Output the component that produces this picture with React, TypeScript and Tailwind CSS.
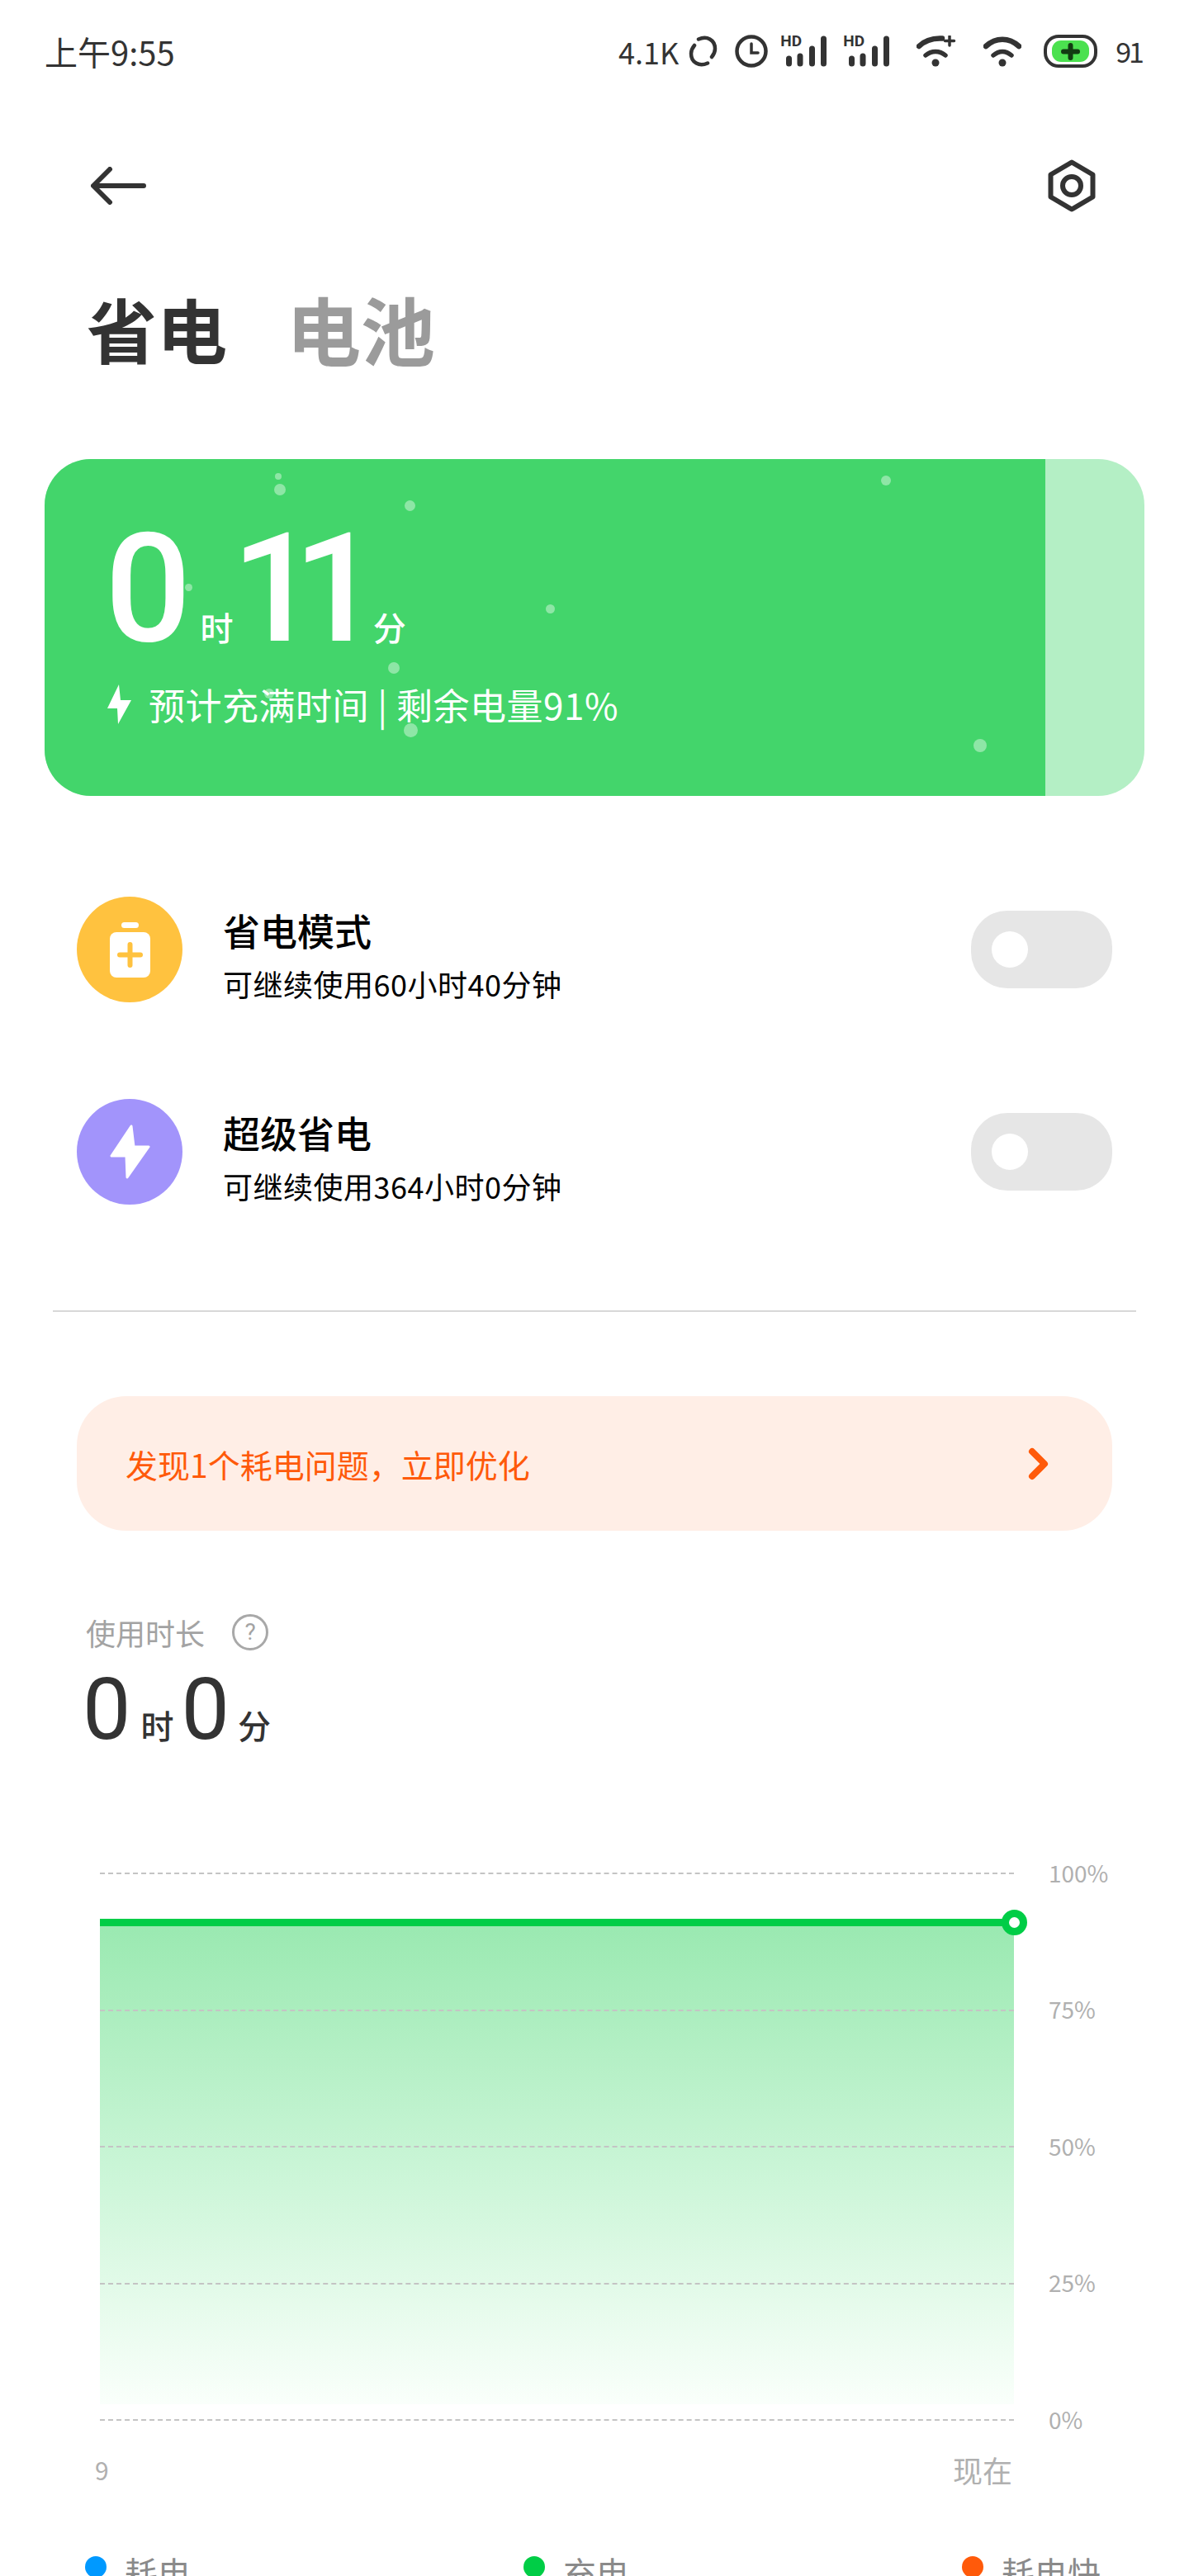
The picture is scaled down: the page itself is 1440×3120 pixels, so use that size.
import React from 'react';

const cjk = "font-['Noto_Sans_CJK_SC',sans-serif]";
const num = "font-['Roboto','Noto_Sans_CJK_SC',sans-serif]";

const bubbles = [
  'left-[279px] top-[17px] w-[8px] h-[8px]',
  'left-[278px] top-[30px] w-[14px] h-[14px]',
  'left-[436px] top-[50px] w-[13px] h-[13px]',
  'left-[170px] top-[151px] w-[9px] h-[9px]',
  'left-[607px] top-[176px] w-[11px] h-[11px]',
  'left-[416px] top-[246px] w-[14px] h-[14px]',
  'left-[266px] top-[278px] w-[12px] h-[12px]',
  'left-[435px] top-[320px] w-[17px] h-[17px]',
  'left-[1013px] top-[20px] w-[12px] h-[12px]',
  'left-[1125px] top-[339px] w-[16px] h-[16px]',
];

function Signal() {
  return (
    <span className="relative block w-[57px] h-[38px]">
      <span className="absolute left-0 -top-[3px] text-[19px] leading-[20px] font-bold text-[#333] font-['Roboto',sans-serif]">HD</span>
      <svg width="57" height="38" viewBox="0 0 57 38" className="absolute inset-0">
        <path d="M10.5 28v6M24 25v9M38.500 16v18M52.500 4v30" stroke="#333" strokeWidth="7" strokeLinecap="round" />
      </svg>
    </span>
  );
}

function Toggle() {
  return (
    <div className="w-[171px] h-[94px] rounded-[44px] bg-[#e6e6e6] flex items-center pl-[25px] shrink-0">
      <div className="w-[44px] h-[44px] rounded-full bg-white" />
    </div>
  );
}

function ModeRow({ color, icon, title, sub }: { color: string; icon: React.ReactNode; title: string; sub: string }) {
  return (
    <div className="flex h-[128px] pl-[93px] pr-[93px]">
      <div className={`${color} w-[128px] h-[128px] rounded-full flex items-center justify-center shrink-0`}>{icon}</div>
      <div className={`${cjk} ml-[49px] flex-1 pt-[16px]`}>
        <div className="text-[45px] leading-[50px] text-black font-medium">{title}</div>
        <div className="text-[36px] leading-[44px] mt-[17px] text-black tracking-[0.5px]">{sub}</div>
      </div>
      <div className="self-center">
        <Toggle />
      </div>
    </div>
  );
}

function GridLine({ label }: { label: string }) {
  return (
    <div className="flex items-center h-[2px]">
      <div className="w-[1107px] border-t-2 border-dashed border-[#c4c4c4] ml-[121px]" />
      <span className={`${cjk} ml-[42px] -mt-[3px] text-[28px] leading-[36px] text-[#b0b0b0]`}>{label}</span>
    </div>
  );
}

function Legend({ color, label }: { color: string; label: string }) {
  return (
    <div className="flex items-start gap-[22px] w-[531px] shrink-0">
      <span className={`${color} w-[26px] h-[26px] rounded-full mt-[5px]`} />
      <span className={`${cjk} text-[40px] leading-[48px] text-[#8a8a8a]`}>{label}</span>
    </div>
  );
}

export default function App() {
  return (
    <div className="w-[1440px] h-[3120px] overflow-hidden bg-white">
      {/* status bar */}
      <div className="flex items-center justify-between h-[124px] pl-[54px] pr-[57px] text-[#333]">
        <span className={`${cjk} text-[40px] leading-[44px]`}>上午9:55</span>
        <div className="flex items-center">
          <span className={`${cjk} text-[36px] leading-[44px]`}>4.1K</span>
          <svg width="35" height="38" viewBox="0 0 35 38" className="ml-[12px]" fill="none" stroke="#333" strokeWidth="4.5" strokeLinecap="round">
            <path d="M12 4.500C22 0 32 5 32 16c0 4-1.500 7-4 10" />
            <path d="M23 33.500C13 38 3 33 3 22c0-4 1.500-7 4-10" />
          </svg>
          <svg width="40" height="40" viewBox="0 0 40 40" className="ml-[21px]" fill="none" stroke="#333" strokeWidth="4.5">
            <circle cx="20" cy="20" r="17.500" />
            <path d="M20 11v11h8" strokeLinecap="round" strokeWidth="3.500" />
          </svg>
          <span className="ml-[15px]"><Signal /></span>
          <span className="ml-[19px]"><Signal /></span>
          <svg width="48" height="38" viewBox="0 0 48 38" className="ml-[32px]" fill="none" stroke="#333" strokeLinecap="round">
            <path d="M3 13C11 5 21 3 31 3.500" strokeWidth="6.500" />
            <path d="M11 24c7-6 17-6 24 0" strokeWidth="5.500" />
            <circle cx="23" cy="33" r="4.500" fill="#333" stroke="none" />
            <path d="M40 1v11M34.500 6.500h11" strokeWidth="3.500" />
          </svg>
          <svg width="46" height="38" viewBox="0 0 46 38" className="ml-[33px]" fill="none" stroke="#333" strokeLinecap="round">
            <path d="M3 13c12-11 28-11 40 0" strokeWidth="6.500" />
            <path d="M12 24c7-6 15-6 22 0" strokeWidth="5.500" />
            <circle cx="23" cy="33" r="4.500" fill="#333" stroke="none" />
          </svg>
          <span className="ml-[27px] w-[65px] h-[40px] rounded-[18px] border-[4px] border-[#333] flex items-center justify-center">
            <span className="w-[45px] h-[26px] rounded-[11px] bg-[#4be14f] flex items-center justify-center">
              <svg width="23" height="21" viewBox="0 0 23 21"><path d="M11.500 3v15M3 10.500h17" stroke="#123c12" strokeWidth="6" strokeLinecap="round" /></svg>
            </span>
          </span>
          <span className={`${cjk} ml-[22px] text-[34px] leading-[44px] tracking-[-3px]`}>91</span>
        </div>
      </div>

      {/* back + settings */}
      <div className="flex items-center justify-between h-[100px] mt-[51px] pl-[110px] pr-[113px]">
        <svg width="67" height="46" viewBox="0 0 67 46" fill="none" stroke="#333" strokeWidth="6" strokeLinecap="round" strokeLinejoin="round">
          <path d="M64 23H4M23 3L3 23l20 20" />
        </svg>
        <svg width="58" height="64" viewBox="0 0 58 64" fill="none" stroke="#333" strokeWidth="6" strokeLinejoin="round">
          <path d="M29 3.500l25.500 15v27L29 60.500 3.500 45.500v-27z" />
          <circle cx="29" cy="32" r="11" />
        </svg>
      </div>

      {/* tabs */}
      <div className={`${cjk} flex items-center gap-[72px] h-[100px] mt-[72px] pl-[105px] leading-[100px] font-bold`}>
        <span className="text-[#333] text-[85px]">省电</span>
        <span className="text-[#9b9b9b] text-[90px]">电池</span>
      </div>

      {/* charge card */}
      <div className="relative mx-[54px] mt-[109px] h-[408px] rounded-[56px] overflow-hidden bg-[#b4efc5] flex">
        <div className="w-[1212px] h-full bg-[#43d56b] pl-[73px] pt-[72px]">
          <div className={`${num} flex items-baseline text-white h-[170px]`}>
            <span className="text-[184px] leading-[170px] font-medium">0</span>
            <span className="text-[40px] ml-[11px] font-medium">时</span>
            <span className="text-[184px] leading-[170px] font-medium tracking-[-30px] -ml-[2px]">11</span>
            <span className="text-[40px] ml-[22px] font-medium">分</span>
          </div>
          <div className="flex items-center mt-[30px] h-[50px] pl-[3px] text-white">
            <svg width="29" height="48" viewBox="0 0 29 48" fill="#fff"><path d="M14 0L0 29h12l1 19 16-29H16z" /></svg>
            <span className={`${cjk} ml-[21px] text-[44px] leading-[50px] tracking-[0.5px]`}>预计充满时间 | 剩余电量91%</span>
          </div>
        </div>
        {bubbles.map((c, i) => (
          <span key={i} className={`${c} absolute rounded-full bg-white/40`} />
        ))}
      </div>

      {/* modes */}
      <div className="flex flex-col gap-[117px] mt-[122px]">
        <ModeRow
          color="bg-[#ffc23f]"
          title="省电模式"
          sub="可继续使用60小时40分钟"
          icon={
            <svg width="49" height="67" viewBox="0 0 49 67">
              <rect x="14" y="0" width="21" height="7" rx="3.500" fill="#fff" />
              <rect x="0" y="12" width="49" height="55" rx="8" fill="#fff" />
              <path d="M24.500 27v25M12 39.500h25" stroke="#ffc23f" strokeWidth="6" strokeLinecap="round" />
            </svg>
          }
        />
        <ModeRow
          color="bg-[#a294fb]"
          title="超级省电"
          sub="可继续使用364小时0分钟"
          icon={
            <svg width="49" height="66" viewBox="0 0 49 66" fill="#fff" stroke="#fff" strokeWidth="3" strokeLinejoin="round">
              <path d="M26 2L2 38h18l1 26 26-37H29z" />
            </svg>
          }
        />
      </div>

      <div className="mx-[64px] mt-[128px] h-[2px] bg-[#d8d8d8]" />

      {/* issue banner */}
      <div className="mx-[93px] mt-[102px] h-[163px] rounded-[60px] bg-[#ffeee6] flex items-center justify-between pl-[59px] pr-[76px]">
        <span className={`${cjk} text-[39px] leading-[44px] text-[#ff5a0a]`}>发现1个耗电问题，立即优化</span>
        <svg width="26" height="40" viewBox="0 0 26 40" fill="none" stroke="#ff5a0a" strokeWidth="8" strokeLinecap="round" strokeLinejoin="round"><path d="M5 5l15 15L5 35" /></svg>
      </div>

      {/* usage */}
      <div className="pl-[104px] mt-[99px]">
        <div className="flex items-center h-[48px]">
          <span className={`${cjk} text-[36px] leading-[44px] text-[#a3a3a3]`}>使用时长</span>
          <span className="ml-[33px] w-[44px] h-[44px] rounded-full border-[3px] border-[#a8a8a8] flex items-center justify-center text-[28px] leading-none text-[#a3a3a3] font-['Roboto',sans-serif]">?</span>
        </div>
        <div className={`${num} flex items-baseline text-[#333] mt-[20px] h-[100px] -ml-[4px]`}>
          <span className="text-[104px] leading-[100px]">0</span>
          <span className="text-[40px] ml-[12px] font-medium">时</span>
          <span className="text-[104px] leading-[100px] ml-[9px]">0</span>
          <span className="text-[40px] ml-[10px] font-medium">分</span>
        </div>
      </div>

      {/* chart */}
      <div className="relative mt-[147px] h-[664px]">
        <div className="absolute left-[121px] top-[64px] w-[1107px] h-[580px] bg-gradient-to-b from-[#9ae9b1] via-[#c9f5d6] to-[#fafffb]" />
        <div className="relative flex flex-col gap-[163.5px]">
          <GridLine label="100%" />
          <GridLine label="75%" />
          <GridLine label="50%" />
          <GridLine label="25%" />
          <GridLine label="0%" />
        </div>
        <div className="absolute left-[121px] top-[56px] w-[1107px] h-[9px] bg-[#00cd46]" />
        <div className="absolute left-[1213px] top-[45px] w-[31px] h-[31px] rounded-full border-[9px] border-[#00cd46] bg-white" />
      </div>

      <div className={`${cjk} flex justify-between items-center ml-[115px] mr-[214px] mt-[39px] h-[40px] text-[#b0b0b0]`}>
        <span className="text-[30px] leading-[40px]">9</span>
        <span className="text-[36px] leading-[40px]">现在</span>
      </div>

      <div className="flex pl-[103px] mt-[80px]">
        <Legend color="bg-[#0099ff]" label="耗电" />
        <Legend color="bg-[#00cd46]" label="充电" />
        <Legend color="bg-[#ff5a0a]" label="耗电快" />
      </div>
    </div>
  );
}
